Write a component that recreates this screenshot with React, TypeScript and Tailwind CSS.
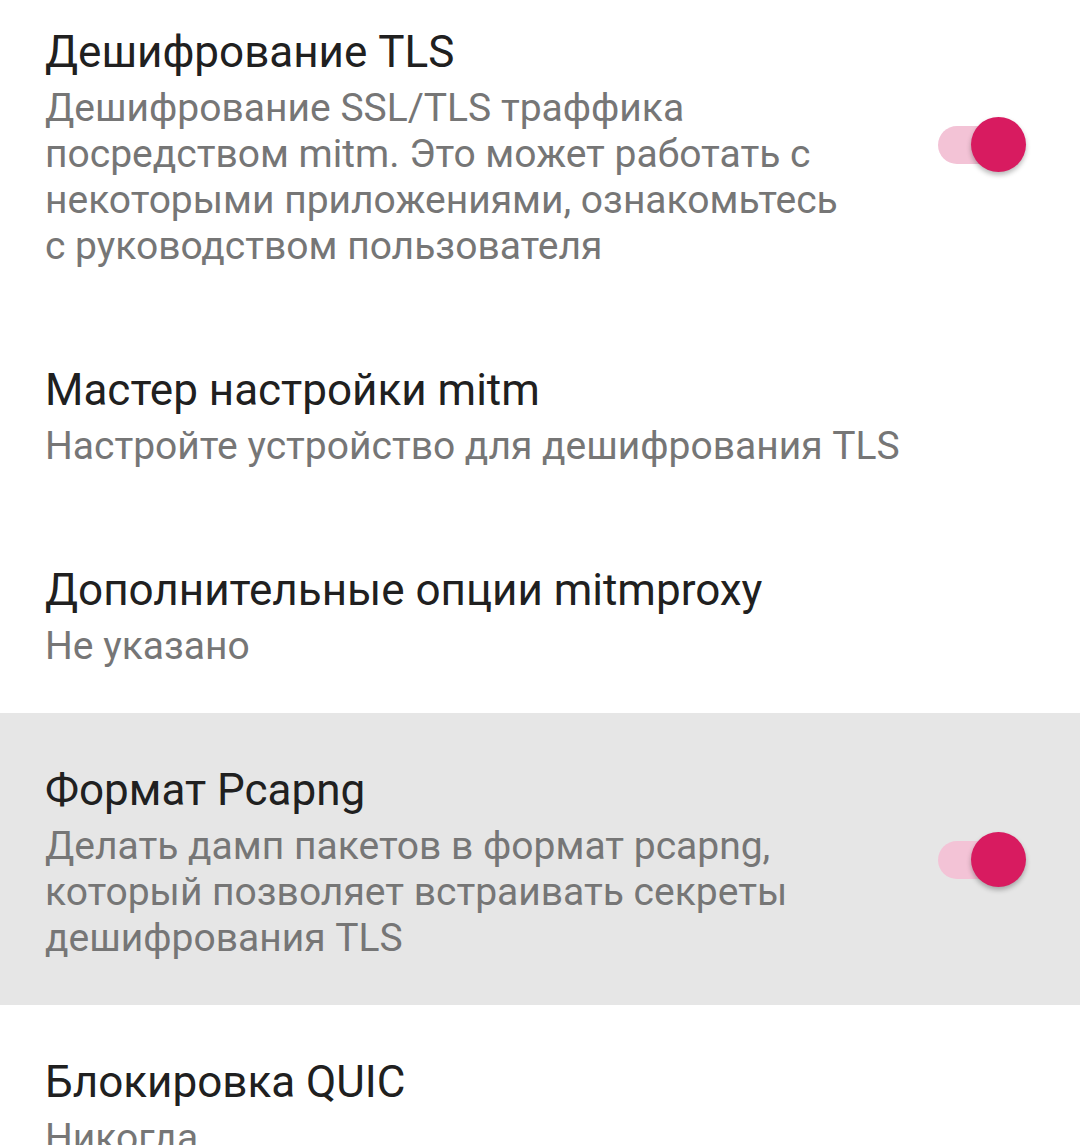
import React from "react";

interface PrefRowProps {
  title: string;
  lines: string[];
  checked?: boolean;
  highlighted?: boolean;
}

function Toggle() {
  return (
    <div className="relative mb-[7px] h-[56px] w-[90px] shrink-0">
      <div className="absolute left-0 top-[9px] h-[38px] w-[86px] rounded-full bg-[#f3c3d6]" />
      <div className="absolute right-[2px] top-0 h-[55px] w-[55px] rounded-full bg-[#d81b60] shadow-[0_3px_5px_rgba(0,0,0,0.28)]" />
    </div>
  );
}

function PrefRow({ title, lines, checked, highlighted }: PrefRowProps) {
  return (
    <div
      className={`flex items-center pl-[45px] pr-[52px] pt-[53px] pb-[44px] ${
        highlighted ? "bg-[#e6e6e6]" : "bg-white"
      }`}
    >
      <div className="min-w-0 flex-1">
        <h2 className="whitespace-nowrap text-[44px] leading-[48px] text-[#202020]">{title}</h2>
        <p className="mt-[9px] text-[39px] leading-[46px] text-[#767676]">
          {lines.map((line, i) => (
            <span key={i} className="block whitespace-nowrap">
              {line}
            </span>
          ))}
        </p>
      </div>
      {checked && <Toggle />}
    </div>
  );
}

export default function App() {
  return (
    <div
      className="h-[1145px] w-[1080px] overflow-hidden bg-white"
      style={{ fontFamily: "Roboto, 'Noto Sans', sans-serif" }}
    >
      <div className="-mt-[25px]">
        <PrefRow
          title="Дешифрование TLS"
          lines={[
            "Дешифрование SSL/TLS траффика",
            "посредством mitm. Это может работать с",
            "некоторыми приложениями, ознакомьтесь",
            "с руководством пользователя",
          ]}
          checked
        />
        <PrefRow
          title="Мастер настройки mitm"
          lines={["Настройте устройство для дешифрования TLS"]}
        />
        <PrefRow
          title="Дополнительные опции mitmproxy"
          lines={["Не указано"]}
        />
        <PrefRow
          title="Формат Pcapng"
          lines={[
            "Делать дамп пакетов в формат pcapng,",
            "который позволяет встраивать секреты",
            "дешифрования TLS",
          ]}
          checked
          highlighted
        />
        <PrefRow title="Блокировка QUIC" lines={["Никогда"]} />
      </div>
    </div>
  );
}
